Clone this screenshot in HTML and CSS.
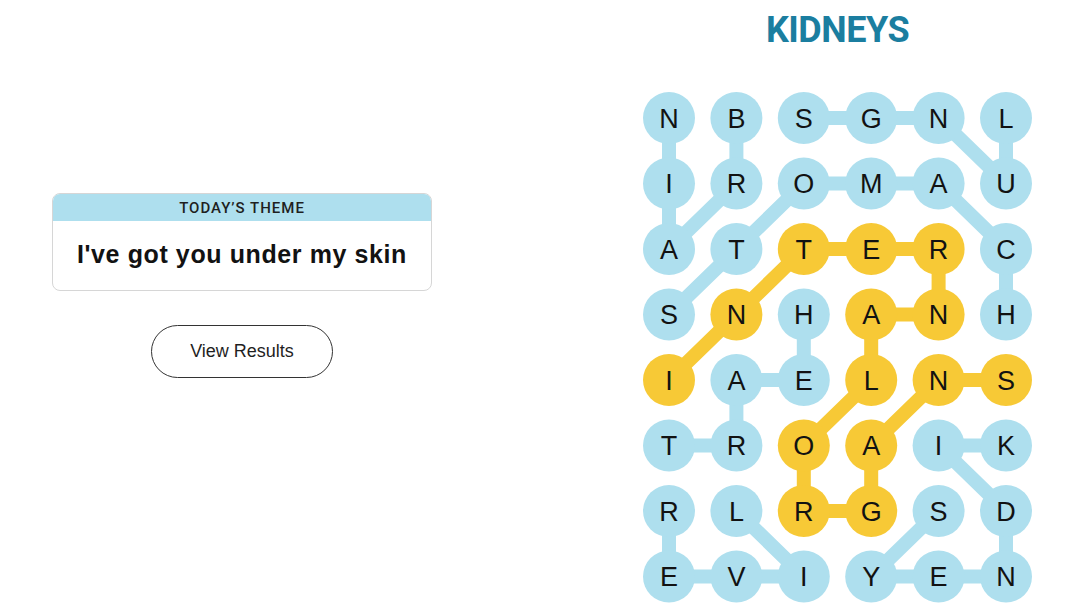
FILE: index.html
```html
<!DOCTYPE html>
<html lang="en">
<head>
<meta charset="utf-8">
<title>Strands</title>
<link rel="stylesheet" href="styles.css">
</head>
<body>
<main class="page">
  <section class="left">
    <div class="theme-card">
      <div class="theme-head">TODAY’S THEME</div>
      <div class="theme-body">I've got you under my skin</div>
    </div>
    <button class="results-btn" type="button">View Results</button>
  </section>
  <section class="right">
    <h1 class="title">KIDNEYS</h1>
    <svg class="board" width="389" height="511" viewBox="0 0 389 511">
      <g class="links blue">
        <polyline points="93.4,26 93.4,91.5 26,157 26,91.5 26,26"/>
        <polyline points="363,26 363,91.5 295.6,26 228.2,26 160.8,26"/>
        <polyline points="26,222.5 93.4,157 160.8,91.5 228.2,91.5 295.6,91.5 363,157 363,222.5"/>
        <polyline points="160.8,222.5 160.8,288 93.4,288 93.4,353.5 26,353.5"/>
        <polyline points="363,353.5 295.6,353.5 363,419 363,484.5 295.6,484.5 228.2,484.5 295.6,419"/>
        <polyline points="93.4,419 160.8,484.5 93.4,484.5 26,484.5 26,419"/>
      </g>
      <g class="links gold">
        <polyline points="26,288 93.4,222.5 160.8,157 228.2,157 295.6,157 295.6,222.5 228.2,222.5 228.2,288 160.8,353.5 160.8,419 228.2,419 228.2,353.5 295.6,288 363,288"/>
      </g>
      <g class="cells">
        <g class="cell blue" transform="translate(26,26)"><circle r="26"/><text y="9.5">N</text></g>
        <g class="cell blue" transform="translate(93.4,26)"><circle r="26"/><text y="9.5">B</text></g>
        <g class="cell blue" transform="translate(160.8,26)"><circle r="26"/><text y="9.5">S</text></g>
        <g class="cell blue" transform="translate(228.2,26)"><circle r="26"/><text y="9.5">G</text></g>
        <g class="cell blue" transform="translate(295.6,26)"><circle r="26"/><text y="9.5">N</text></g>
        <g class="cell blue" transform="translate(363,26)"><circle r="26"/><text y="9.5">L</text></g>

        <g class="cell blue" transform="translate(26,91.5)"><circle r="26"/><text y="9.5">I</text></g>
        <g class="cell blue" transform="translate(93.4,91.5)"><circle r="26"/><text y="9.5">R</text></g>
        <g class="cell blue" transform="translate(160.8,91.5)"><circle r="26"/><text y="9.5">O</text></g>
        <g class="cell blue" transform="translate(228.2,91.5)"><circle r="26"/><text y="9.5">M</text></g>
        <g class="cell blue" transform="translate(295.6,91.5)"><circle r="26"/><text y="9.5">A</text></g>
        <g class="cell blue" transform="translate(363,91.5)"><circle r="26"/><text y="9.5">U</text></g>

        <g class="cell blue" transform="translate(26,157)"><circle r="26"/><text y="9.5">A</text></g>
        <g class="cell blue" transform="translate(93.4,157)"><circle r="26"/><text y="9.5">T</text></g>
        <g class="cell gold" transform="translate(160.8,157)"><circle r="26"/><text y="9.5">T</text></g>
        <g class="cell gold" transform="translate(228.2,157)"><circle r="26"/><text y="9.5">E</text></g>
        <g class="cell gold" transform="translate(295.6,157)"><circle r="26"/><text y="9.5">R</text></g>
        <g class="cell blue" transform="translate(363,157)"><circle r="26"/><text y="9.5">C</text></g>

        <g class="cell blue" transform="translate(26,222.5)"><circle r="26"/><text y="9.5">S</text></g>
        <g class="cell gold" transform="translate(93.4,222.5)"><circle r="26"/><text y="9.5">N</text></g>
        <g class="cell blue" transform="translate(160.8,222.5)"><circle r="26"/><text y="9.5">H</text></g>
        <g class="cell gold" transform="translate(228.2,222.5)"><circle r="26"/><text y="9.5">A</text></g>
        <g class="cell gold" transform="translate(295.6,222.5)"><circle r="26"/><text y="9.5">N</text></g>
        <g class="cell blue" transform="translate(363,222.5)"><circle r="26"/><text y="9.5">H</text></g>

        <g class="cell gold" transform="translate(26,288)"><circle r="26"/><text y="9.5">I</text></g>
        <g class="cell blue" transform="translate(93.4,288)"><circle r="26"/><text y="9.5">A</text></g>
        <g class="cell blue" transform="translate(160.8,288)"><circle r="26"/><text y="9.5">E</text></g>
        <g class="cell gold" transform="translate(228.2,288)"><circle r="26"/><text y="9.5">L</text></g>
        <g class="cell gold" transform="translate(295.6,288)"><circle r="26"/><text y="9.5">N</text></g>
        <g class="cell gold" transform="translate(363,288)"><circle r="26"/><text y="9.5">S</text></g>

        <g class="cell blue" transform="translate(26,353.5)"><circle r="26"/><text y="9.5">T</text></g>
        <g class="cell blue" transform="translate(93.4,353.5)"><circle r="26"/><text y="9.5">R</text></g>
        <g class="cell gold" transform="translate(160.8,353.5)"><circle r="26"/><text y="9.5">O</text></g>
        <g class="cell gold" transform="translate(228.2,353.5)"><circle r="26"/><text y="9.5">A</text></g>
        <g class="cell blue" transform="translate(295.6,353.5)"><circle r="26"/><text y="9.5">I</text></g>
        <g class="cell blue" transform="translate(363,353.5)"><circle r="26"/><text y="9.5">K</text></g>

        <g class="cell blue" transform="translate(26,419)"><circle r="26"/><text y="9.5">R</text></g>
        <g class="cell blue" transform="translate(93.4,419)"><circle r="26"/><text y="9.5">L</text></g>
        <g class="cell gold" transform="translate(160.8,419)"><circle r="26"/><text y="9.5">R</text></g>
        <g class="cell gold" transform="translate(228.2,419)"><circle r="26"/><text y="9.5">G</text></g>
        <g class="cell blue" transform="translate(295.6,419)"><circle r="26"/><text y="9.5">S</text></g>
        <g class="cell blue" transform="translate(363,419)"><circle r="26"/><text y="9.5">D</text></g>

        <g class="cell blue" transform="translate(26,484.5)"><circle r="26"/><text y="9.5">E</text></g>
        <g class="cell blue" transform="translate(93.4,484.5)"><circle r="26"/><text y="9.5">V</text></g>
        <g class="cell blue" transform="translate(160.8,484.5)"><circle r="26"/><text y="9.5">I</text></g>
        <g class="cell blue" transform="translate(228.2,484.5)"><circle r="26"/><text y="9.5">Y</text></g>
        <g class="cell blue" transform="translate(295.6,484.5)"><circle r="26"/><text y="9.5">E</text></g>
        <g class="cell blue" transform="translate(363,484.5)"><circle r="26"/><text y="9.5">N</text></g>
      </g>
    </svg>
  </section>
</main>
</body>
</html>
```

FILE: styles.css
```css
html, body {
  margin: 0;
  padding: 0;
  background: #ffffff;
}

body {
  width: 1080px;
  height: 608px;
  overflow: hidden;
  font-family: "Liberation Sans", Arial, sans-serif;
  color: #121212;
}

.page {
  display: grid;
  grid-template-columns: 484px 485px;
  justify-content: space-between;
  height: 608px;
}

.left {
  display: flex;
  flex-direction: column;
  align-items: center;
  padding-top: 193px;
}

.theme-card {
  width: 378px;
  border: 1px solid #d6d6d6;
  border-radius: 8px;
  overflow: hidden;
  background: #ffffff;
}

.theme-head {
  height: 27px;
  background: #aedfee;
  font-family: Roboto, "Liberation Sans", sans-serif;
  font-size: 15px;
  font-weight: 500;
  letter-spacing: 1px;
  line-height: 29px;
  text-align: center;
  color: #1f1f1f;
}

.theme-body {
  height: 69px;
  line-height: 66px;
  text-align: center;
  font-size: 25px;
  font-weight: bold;
  letter-spacing: 0.6px;
  color: #121212;
}

.results-btn {
  margin-top: 34px;
  width: 182px;
  height: 53px;
  border: 1px solid #333333;
  border-radius: 27px;
  background: #ffffff;
  font-family: "Liberation Sans", Arial, sans-serif;
  font-size: 18px;
  color: #1f1f1f;
  padding: 0;
}

.right {
  display: flex;
  flex-direction: column;
  align-items: center;
}

.title {
  margin: 12px 0 0;
  font-family: Roboto, "Liberation Sans", sans-serif;
  font-size: 36px;
  line-height: 36px;
  font-weight: bold;
  letter-spacing: -0.5px;
  color: #1b7ea0;
}

.board {
  display: block;
  margin-top: 44px;
}

.links polyline {
  fill: none;
  stroke-width: 14;
  stroke-linejoin: round;
  stroke-linecap: round;
}

.links.blue polyline {
  stroke: #aedfee;
}

.links.gold polyline {
  stroke: #f7c936;
}

.cell.blue circle {
  fill: #aedfee;
}

.cell.gold circle {
  fill: #f7c936;
}

.cell text {
  font-family: "Liberation Sans", Arial, sans-serif;
  font-size: 27px;
  text-anchor: middle;
  fill: #121212;
}
```
